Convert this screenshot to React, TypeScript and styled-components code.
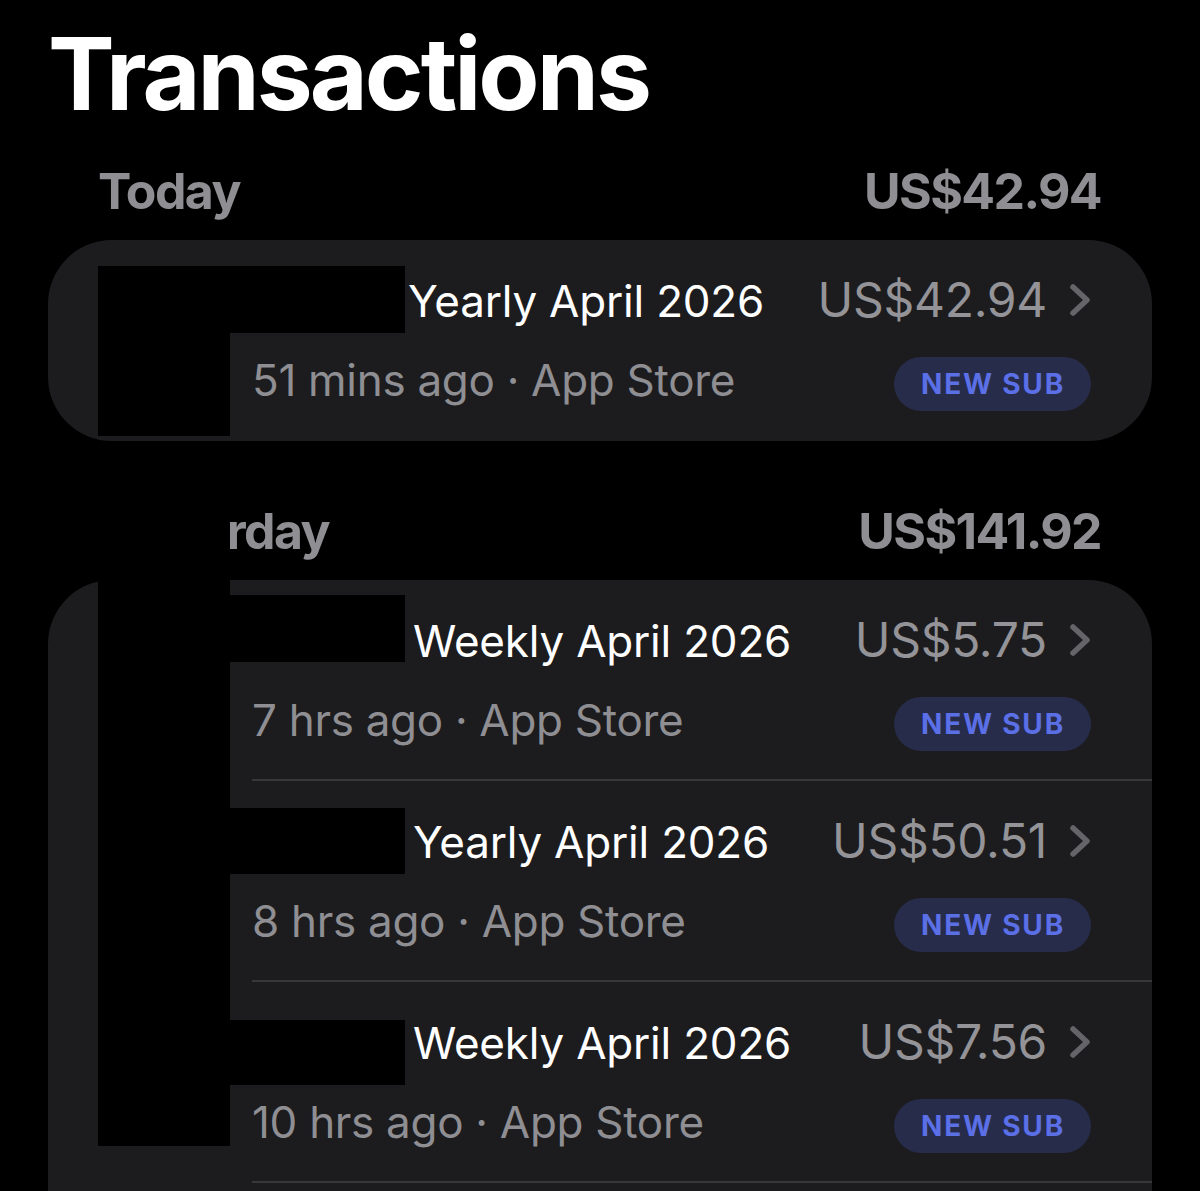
import React from "react";
import styled, { createGlobalStyle } from "styled-components";

const colors = {
  bg: "#000000",
  card: "#1c1c1e",
  label: "#ffffff",
  secondary: "#8e8e93",
  chevron: "#646469",
  separator: "#38383a",
  pillBg: "#272c4a",
  pillText: "#5b6fe6",
};

const sections = [
  {
    label: "Today",
    total: "US$42.94",
    more: false,
    rows: [
      { app: 156, plan: "Yearly April 2026", price: "US$42.94", when: "51 mins ago" },
    ],
  },
  {
    label: "Yesterday",
    total: "US$141.92",
    more: true,
    rows: [
      { app: 161, plan: "Weekly April 2026", price: "US$5.75", when: "7 hrs ago" },
      { app: 161, plan: "Yearly April 2026", price: "US$50.51", when: "8 hrs ago" },
      { app: 161, plan: "Weekly April 2026", price: "US$7.56", when: "10 hrs ago" },
    ],
  },
];

// blacked-out app names / icons, laid over the list like in the screenshot
const masks = [
  { top: 266, left: 98, width: 132, height: 170 },
  { top: 266, left: 230, width: 175, height: 67 },
  { top: 510, left: 98, width: 132, height: 636 },
  { top: 595, left: 230, width: 175, height: 67 },
  { top: 808, left: 230, width: 175, height: 66 },
  { top: 1020, left: 230, width: 175, height: 65 },
];

function Chevron() {
  return (
    <ChevronIcon viewBox="0 0 22 34" width="22" height="34">
      <polyline
        points="4,4 18,17 4,30"
        fill="none"
        stroke={colors.chevron}
        strokeWidth="5.5"
        strokeLinecap="round"
        strokeLinejoin="round"
      />
    </ChevronIcon>
  );
}

export default function App() {
  return (
    <>
      <GlobalStyle />
      <Page>
        <Title>Transactions</Title>
        {sections.map((section) => (
          <Section key={section.label}>
            <SectionHeader>
              <span>{section.label}</span>
              <span>{section.total}</span>
            </SectionHeader>
            <Card $more={section.more}>
              {section.rows.map((row, idx) => (
                <Row key={idx}>
                  <AppIcon />
                  <Content $divided={section.more}>
                    <TopLine>
                      <Plan>
                        <AppName $width={row.app} />
                        {row.plan}
                      </Plan>
                      <Price>{row.price}</Price>
                      <Chevron />
                    </TopLine>
                    <BottomLine>
                      <Meta>{row.when} · App Store</Meta>
                      <Badge>NEW SUB</Badge>
                    </BottomLine>
                  </Content>
                </Row>
              ))}
            </Card>
          </Section>
        ))}
        {masks.map((m, idx) => (
          <Mask key={idx} $top={m.top} $left={m.left} $width={m.width} $height={m.height} />
        ))}
      </Page>
    </>
  );
}

const GlobalStyle = createGlobalStyle`
  html, body {
    margin: 0;
    padding: 0;
    background: ${colors.bg};
  }
  body {
    font-family: Inter, "Noto Sans", sans-serif;
    -webkit-font-smoothing: antialiased;
  }
`;

const Page = styled.div`
  position: relative;
  padding: 0 48px 40px;
  min-height: 100vh;
  box-sizing: border-box;
  overflow: hidden;
`;

const Title = styled.h1`
  margin: 24px 0 0 0;
  font-size: 100px;
  line-height: 100px;
  font-weight: 700;
  letter-spacing: -3px;
  color: ${colors.label};
`;

const Section = styled.section`
  margin-top: 37px;
  & + & {
    margin-top: 60px;
  }
`;

const SectionHeader = styled.div`
  display: flex;
  justify-content: space-between;
  align-items: baseline;
  height: 60px;
  padding: 0 51px 0 50px;
  margin-bottom: 19px;
  font-size: 50px;
  line-height: 60px;
  font-weight: 700;
  letter-spacing: -1.6px;
  color: ${colors.secondary};
`;

const Card = styled.div<{ $more: boolean }>`
  background: ${colors.card};
  border-radius: 64px;
  overflow: hidden;
  padding-bottom: ${(p) => (p.$more ? "120px" : "0")};
`;

const Row = styled.div`
  display: grid;
  grid-template-columns: 132px 1fr;
  column-gap: 22px;
  padding-left: 50px;
  height: 201px;
`;

const AppIcon = styled.div`
  margin-top: 26px;
  width: 132px;
  height: 132px;
  background: #000;
`;

const Content = styled.div<{ $divided: boolean }>`
  box-sizing: border-box;
  padding: 32px 61px 0 0;
  border-bottom: ${(p) => (p.$divided ? `2px solid ${colors.separator}` : "none")};
`;

const TopLine = styled.div`
  display: flex;
  align-items: baseline;
  height: 58px;
`;

const Plan = styled.div`
  flex: 1;
  font-size: 44px;
  line-height: 56px;
  letter-spacing: -0.2px;
  color: ${colors.label};
  white-space: nowrap;
`;

const AppName = styled.span<{ $width: number }>`
  display: inline-block;
  width: ${(p) => p.$width}px;
`;

const Price = styled.div`
  font-size: 48px;
  line-height: 56px;
  letter-spacing: -0.3px;
  color: #939398;
  margin-right: 22px;
`;

const ChevronIcon = styled.svg`
  display: block;
  flex: none;
`;

const BottomLine = styled.div`
  display: flex;
  align-items: center;
  justify-content: space-between;
  margin-top: 23px;
`;

const Meta = styled.div`
  font-size: 44px;
  line-height: 54px;
  letter-spacing: -0.3px;
  padding-bottom: 8px;
  color: ${colors.secondary};
  white-space: nowrap;
`;

const Badge = styled.div`
  display: flex;
  align-items: center;
  height: 54px;
  padding: 0 26px 0 27px;
  border-radius: 27px;
  background: ${colors.pillBg};
  color: ${colors.pillText};
  font-size: 28px;
  font-weight: 700;
  letter-spacing: 1.8px;
`;

const Mask = styled.div<{ $top: number; $left: number; $width: number; $height: number }>`
  position: absolute;
  top: ${(p) => p.$top}px;
  left: ${(p) => p.$left}px;
  width: ${(p) => p.$width}px;
  height: ${(p) => p.$height}px;
  background: #000;
`;
